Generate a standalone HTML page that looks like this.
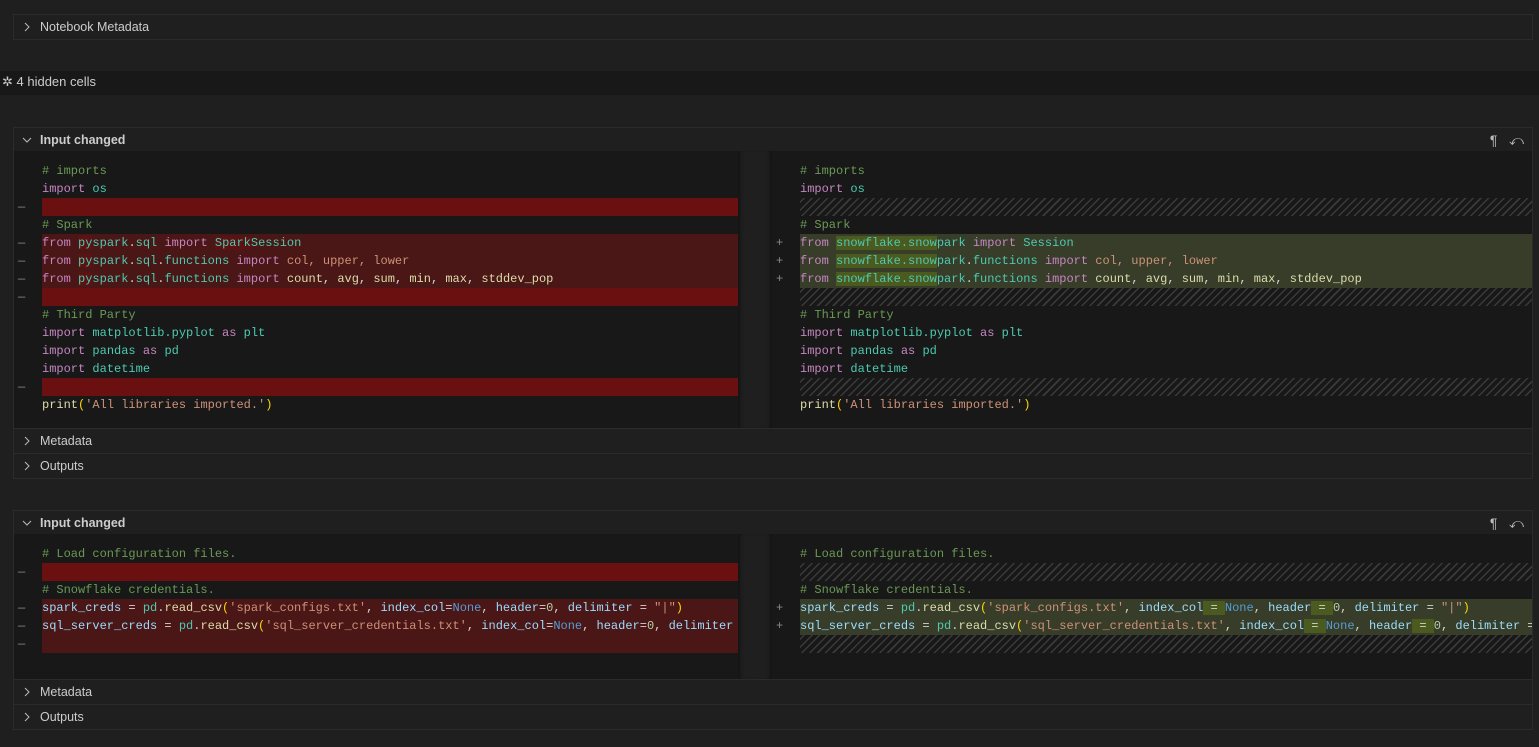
<!DOCTYPE html>
<html><head><meta charset="utf-8"><style>
*{margin:0;padding:0;box-sizing:border-box}
body{width:1539px;height:747px;background:#1f1f1f;font-family:"Liberation Sans",sans-serif;color:#cccccc;position:relative;overflow:hidden;font-size:12.5px}
.box{position:absolute;left:13px;width:1520px;border:1px solid #2b2b2b}
.row{position:absolute;left:0;right:0;height:25px;line-height:24px;padding-left:26px;color:#cccccc}
.row svg.chev{position:absolute;left:8px;top:7px}
.hdr{font-weight:bold;background:#1f1f1f}
.code{position:absolute;background:#181818;font-family:"Liberation Mono",monospace;font-size:12px;overflow:hidden}
.ln{position:absolute;left:0;right:0;height:18px;line-height:19px;white-space:pre}
.ln .t{position:absolute;left:28px}
.del{background:#4a1616}
.delb{background:#6b1010}
.ins{background:#373d29}
.hat{background:repeating-linear-gradient(-45deg,#181818 0 4px,#3a3a3a 4px 5.5px)}
.mk{position:absolute;left:4px;color:#888}
.c{color:#6a9955}.k{color:#c586c0}.m{color:#4ec9b0}.s{color:#ce9178}.f{color:#dcdcaa}.v{color:#9cdcfe}.n{color:#569cd6}.num{color:#b5cea8}.p{color:#ffd700}.w{color:#d4d4d4}.o{color:#ce9178}
.hr{background:#5a1212}.hg{background:#4b5a1f}
.gut{position:absolute;background:#1f1f1f;box-shadow:inset 5px 0 5px -4px #0e0e0e,inset -5px 0 5px -4px #0e0e0e}
.icons{position:absolute;right:8px;top:0;color:#bbb;font-size:14px;font-weight:normal}
</style></head><body>

<div class="box" style="top:14px;height:26px"><div class="row" style="top:0"><svg class="chev" width="10" height="10"><polyline points="3,1 7,5 3,9" fill="none" stroke="#bbb" stroke-width="1"/></svg>Notebook Metadata</div></div>

<div style="position:absolute;left:0;right:0;top:71px;height:24px;background:#181818;line-height:22px;font-size:13px;color:#ccc;padding-left:2px">✲ 4 hidden cells</div>

<!-- Cell 1 -->
<div class="box" style="top:127px;height:352px">
 <div class="row hdr" style="top:0;height:24px"><svg class="chev" width="10" height="10"><polyline points="1,3 5,7 9,3" fill="none" stroke="#bbb" stroke-width="1"/></svg>Input changed<span class="icons">¶&nbsp;&nbsp;&nbsp;⤺</span></div>
 <div class="code" style="left:0;top:23px;width:724px;height:277px">
  <div class="ln" style="top:11px"><span class="t c"># imports</span></div>
  <div class="ln" style="top:29px"><span class="t"><span class="k">import</span> <span class="m">os</span></span></div>
  <div class="ln delb" style="top:47px;left:28px"></div>
  <div class="ln" style="top:47px"><span class="mk">—</span></div>
  <div class="ln" style="top:65px"><span class="t c"># Spark</span></div>
  <div class="ln del" style="top:83px;left:28px"></div><div class="ln" style="top:83px"><span class="mk">—</span><span class="t"><span class="k">from</span> <span class="m hr">py</span><span class="m">spark</span><span class="w">.</span><span class="m">sql</span> <span class="k">import</span> <span class="m"><span class="hr">Spark</span>Session</span></span></div>
  <div class="ln del" style="top:101px;left:28px"></div><div class="ln" style="top:101px"><span class="mk">—</span><span class="t"><span class="k">from</span> <span class="m hr">py</span><span class="m">spark</span><span class="w">.</span><span class="m">sql</span><span class="w">.</span><span class="m">functions</span> <span class="k">import</span> <span class="o">col, upper, lower</span></span></div>
  <div class="ln del" style="top:119px;left:28px"></div><div class="ln" style="top:119px"><span class="mk">—</span><span class="t"><span class="k">from</span> <span class="m hr">py</span><span class="m">spark</span><span class="w">.</span><span class="m">sql</span><span class="w">.</span><span class="m">functions</span> <span class="k">import</span> <span class="f">count</span><span class="w">, </span><span class="f">avg</span><span class="w">, </span><span class="f">sum</span><span class="w">, </span><span class="f">min</span><span class="w">, </span><span class="f">max</span><span class="w">, </span><span class="f">stddev_pop</span></span></div>
  <div class="ln delb" style="top:137px;left:28px"></div><div class="ln" style="top:137px"><span class="mk">—</span></div>
  <div class="ln" style="top:155px"><span class="t c"># Third Party</span></div>
  <div class="ln" style="top:173px"><span class="t"><span class="k">import</span> <span class="m">matplotlib.pyplot</span> <span class="k">as</span> <span class="m">plt</span></span></div>
  <div class="ln" style="top:191px"><span class="t"><span class="k">import</span> <span class="m">pandas</span> <span class="k">as</span> <span class="m">pd</span></span></div>
  <div class="ln" style="top:209px"><span class="t"><span class="k">import</span> <span class="m">datetime</span></span></div>
  <div class="ln delb" style="top:227px;left:28px"></div><div class="ln" style="top:227px"><span class="mk">—</span></div>
  <div class="ln" style="top:245px"><span class="t"><span class="f">print</span><span class="p">(</span><span class="s">'All libraries imported.'</span><span class="p">)</span></span></div>
 </div>
 <div class="gut" style="left:724px;top:23px;width:34px;height:277px"></div>
 <div class="code" style="left:758px;top:23px;width:760px;height:277px">
  <div class="ln" style="top:11px"><span class="t c"># imports</span></div>
  <div class="ln" style="top:29px"><span class="t"><span class="k">import</span> <span class="m">os</span></span></div>
  <div class="ln hat" style="top:47px;left:28px"></div>
  <div class="ln" style="top:65px"><span class="t c"># Spark</span></div>
  <div class="ln ins" style="top:83px;left:28px"></div><div class="ln" style="top:83px"><span class="mk">+</span><span class="t"><span class="k">from</span> <span class="m hg">snowflake.snow</span><span class="m">park</span> <span class="k">import</span> <span class="m">Session</span></span></div>
  <div class="ln ins" style="top:101px;left:28px"></div><div class="ln" style="top:101px"><span class="mk">+</span><span class="t"><span class="k">from</span> <span class="m hg">snowflake.snow</span><span class="m">park</span><span class="w">.</span><span class="m">functions</span> <span class="k">import</span> <span class="o">col, upper, lower</span></span></div>
  <div class="ln ins" style="top:119px;left:28px"></div><div class="ln" style="top:119px"><span class="mk">+</span><span class="t"><span class="k">from</span> <span class="m hg">snowflake.snow</span><span class="m">park</span><span class="w">.</span><span class="m">functions</span> <span class="k">import</span> <span class="f">count</span><span class="w">, </span><span class="f">avg</span><span class="w">, </span><span class="f">sum</span><span class="w">, </span><span class="f">min</span><span class="w">, </span><span class="f">max</span><span class="w">, </span><span class="f">stddev_pop</span></span></div>
  <div class="ln hat" style="top:137px;left:28px"></div>
  <div class="ln" style="top:155px"><span class="t c"># Third Party</span></div>
  <div class="ln" style="top:173px"><span class="t"><span class="k">import</span> <span class="m">matplotlib.pyplot</span> <span class="k">as</span> <span class="m">plt</span></span></div>
  <div class="ln" style="top:191px"><span class="t"><span class="k">import</span> <span class="m">pandas</span> <span class="k">as</span> <span class="m">pd</span></span></div>
  <div class="ln" style="top:209px"><span class="t"><span class="k">import</span> <span class="m">datetime</span></span></div>
  <div class="ln hat" style="top:227px;left:28px"></div>
  <div class="ln" style="top:245px"><span class="t"><span class="f">print</span><span class="p">(</span><span class="s">'All libraries imported.'</span><span class="p">)</span></span></div>
 </div>
 <div class="row" style="top:300px;border-top:1px solid #2b2b2b"><svg class="chev" width="10" height="10"><polyline points="3,1 7,5 3,9" fill="none" stroke="#bbb" stroke-width="1"/></svg>Metadata</div>
 <div class="row" style="top:325px;border-top:1px solid #2b2b2b"><svg class="chev" width="10" height="10"><polyline points="3,1 7,5 3,9" fill="none" stroke="#bbb" stroke-width="1"/></svg>Outputs</div>
</div>

<!-- Cell 2 -->
<div class="box" style="top:510px;height:220px">
 <div class="row hdr" style="top:0;height:24px"><svg class="chev" width="10" height="10"><polyline points="1,3 5,7 9,3" fill="none" stroke="#bbb" stroke-width="1"/></svg>Input changed<span class="icons">¶&nbsp;&nbsp;&nbsp;⤺</span></div>
 <div class="code" style="left:0;top:23px;width:724px;height:145px">
  <div class="ln" style="top:11px"><span class="t c"># Load configuration files.</span></div>
  <div class="ln delb" style="top:29px;left:28px"></div><div class="ln" style="top:29px"><span class="mk">—</span></div>
  <div class="ln" style="top:47px"><span class="t c"># Snowflake credentials.</span></div>
  <div class="ln del" style="top:65px;left:28px"></div><div class="ln" style="top:65px"><span class="mk">—</span><span class="t"><span class="v">spark_creds</span><span class="w"> = </span><span class="m">pd</span><span class="w">.</span><span class="f">read_csv</span><span class="p">(</span><span class="s">'spark_configs.txt'</span><span class="w">, </span><span class="v">index_col</span><span class="w">=</span><span class="n">None</span><span class="w">, </span><span class="v">header</span><span class="w">=</span><span class="num">0</span><span class="w">, </span><span class="v">delimiter</span><span class="w"> = </span><span class="s">"|"</span><span class="p">)</span></span></div>
  <div class="ln del" style="top:83px;left:28px"></div><div class="ln" style="top:83px"><span class="mk">—</span><span class="t"><span class="v">sql_server_creds</span><span class="w"> = </span><span class="m">pd</span><span class="w">.</span><span class="f">read_csv</span><span class="p">(</span><span class="s">'sql_server_credentials.txt'</span><span class="w">, </span><span class="v">index_col</span><span class="w">=</span><span class="n">None</span><span class="w">, </span><span class="v">header</span><span class="w">=</span><span class="num">0</span><span class="w">, </span><span class="v">delimiter</span></span></div>
  <div class="ln del" style="top:101px;left:28px"></div><div class="ln" style="top:101px"><span class="mk">—</span></div>
 </div>
 <div class="gut" style="left:724px;top:23px;width:34px;height:145px"></div>
 <div class="code" style="left:758px;top:23px;width:760px;height:145px">
  <div class="ln" style="top:11px"><span class="t c"># Load configuration files.</span></div>
  <div class="ln hat" style="top:29px;left:28px"></div>
  <div class="ln" style="top:47px"><span class="t c"># Snowflake credentials.</span></div>
  <div class="ln ins" style="top:65px;left:28px"></div><div class="ln" style="top:65px"><span class="mk">+</span><span class="t"><span class="v">spark_creds</span><span class="w"> = </span><span class="m">pd</span><span class="w">.</span><span class="f">read_csv</span><span class="p">(</span><span class="s">'spark_configs.txt'</span><span class="w">, </span><span class="v">index_col</span><span class="w hg"> = </span><span class="n">None</span><span class="w">, </span><span class="v">header</span><span class="w hg"> = </span><span class="num">0</span><span class="w">, </span><span class="v">delimiter</span><span class="w"> = </span><span class="s">"|"</span><span class="p">)</span></span></div>
  <div class="ln ins" style="top:83px;left:28px"></div><div class="ln" style="top:83px"><span class="mk">+</span><span class="t"><span class="v">sql_server_creds</span><span class="w"> = </span><span class="m">pd</span><span class="w">.</span><span class="f">read_csv</span><span class="p">(</span><span class="s">'sql_server_credentials.txt'</span><span class="w">, </span><span class="v">index_col</span><span class="w hg"> = </span><span class="n">None</span><span class="w">, </span><span class="v">header</span><span class="w hg"> = </span><span class="num">0</span><span class="w">, </span><span class="v">delimiter</span><span class="w"> =</span></span></div>
  <div class="ln hat" style="top:101px;left:28px"></div>
 </div>
 <div class="row" style="top:168px;border-top:1px solid #2b2b2b"><svg class="chev" width="10" height="10"><polyline points="3,1 7,5 3,9" fill="none" stroke="#bbb" stroke-width="1"/></svg>Metadata</div>
 <div class="row" style="top:193px;border-top:1px solid #2b2b2b"><svg class="chev" width="10" height="10"><polyline points="3,1 7,5 3,9" fill="none" stroke="#bbb" stroke-width="1"/></svg>Outputs</div>
</div>
</body></html>
